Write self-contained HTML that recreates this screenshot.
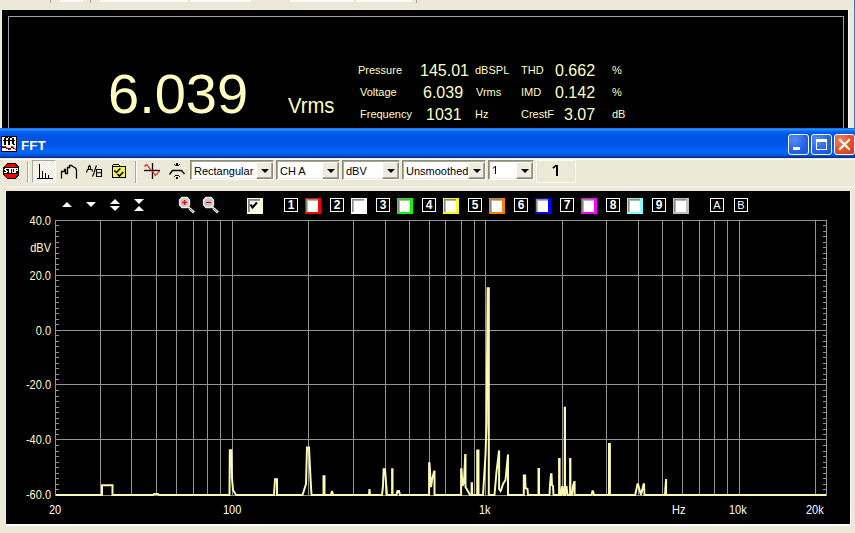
<!DOCTYPE html>
<html><head><meta charset="utf-8">
<style>
*{margin:0;padding:0;box-sizing:border-box}
html,body{width:855px;height:533px;overflow:hidden;background:#ECE9D8;font-family:"Liberation Sans",sans-serif}
.a{position:absolute}
.lbl{position:absolute;color:#FFFFC0;font-size:11px;line-height:11px;white-space:nowrap}
.val{position:absolute;color:#FFFFC0;font-size:16px;line-height:16px;white-space:nowrap}
.combo{position:absolute;top:160px;height:20px;background:#fff;border-top:1px solid #8E8A7A;border-left:1px solid #8E8A7A;border-right:1px solid #fff;border-bottom:1px solid #fff;box-shadow:inset 1px 1px 0 #ACA899, inset -1px -1px 0 #F1EFE6}
.combo span{position:absolute;left:3px;top:4px;font-size:11px;line-height:12px;color:#000;letter-spacing:0px}
.dd{position:absolute;right:0px;top:1px;width:17px;height:17px;background:#EEEBE0;border-top:1px solid #fff;border-left:1px solid #fff;border-right:1px solid #8E8A7A;border-bottom:1px solid #8E8A7A;box-shadow:inset -1px -1px 0 #ACA899}
.dd:after{content:"";position:absolute;left:4px;top:6px;border-left:4px solid transparent;border-right:4px solid transparent;border-top:4px solid #000}
.nb{position:absolute;top:198px;width:14px;height:14px;border:1px solid #fff;color:#fff;font-family:"Liberation Sans",sans-serif;font-weight:bold;font-size:12px;line-height:13px;text-align:center}
.cb{position:absolute;top:198px;width:16px;height:16px}
.cb i{position:absolute;left:1px;top:1px;width:12px;height:13px;background:#fff;border-top:1px solid #8A8A80;border-left:1px solid #8A8A80;box-shadow:inset 1px 1px 0 #B8B4A8}
.tb{position:absolute;top:160px;width:24px;height:23px}
.sep{position:absolute;top:161px;width:2px;height:22px;border-left:1px solid #ACA899;border-right:1px solid #fff}
.xl{position:absolute;color:#fff;font-size:11px;line-height:11px;white-space:nowrap;transform:scaleY(1.13);transform-origin:0 0}
.yl{position:absolute;color:#FFFFC0;font-size:11px;line-height:11px;white-space:nowrap;text-align:right;width:40px;transform:scaleY(1.13);transform-origin:0 0}
</style></head><body>

<!-- top window strip -->
<div class="a" style="left:60px;top:0;width:23px;height:2px;background:#FAF9F5"></div><div class="a" style="left:100px;top:0;width:88px;height:2px;background:#FAF9F5"></div><div class="a" style="left:190px;top:0;width:61px;height:2px;background:#FAF9F5"></div><div class="a" style="left:290px;top:0;width:64px;height:2px;background:#FAF9F5"></div><div class="a" style="left:356px;top:0;width:56px;height:2px;background:#FAF9F5"></div><div class="a" style="left:50px;top:0;width:1px;height:3px;background:#A8A498"></div><div class="a" style="left:90px;top:0;width:1px;height:3px;background:#A8A498"></div><div class="a" style="left:416px;top:0;width:1px;height:3px;background:#A8A498"></div>
<div class="a" style="left:854px;top:0;width:1px;height:128px;background:#3D6DE0"></div>
<!-- top black panel -->
<div class="a" style="left:2px;top:10px;width:847px;height:118px;background:#000;border-right:1px solid #fff"></div>
<div class="a" style="left:8px;top:16px;width:836px;height:130px;border:1px solid #A0A0A0"></div>

<div class="a" style="left:108px;top:62px;font-size:56px;line-height:64px;color:#FFFFC0">6.039</div>
<div class="a" style="left:288px;top:93px;font-size:22px;line-height:25px;color:#FFFFC0;transform:scaleX(0.92);transform-origin:0 0">Vrms</div>

<div class="lbl" style="left:358px;top:65px">Pressure</div>
<div class="lbl" style="left:360px;top:87px">Voltage</div>
<div class="lbl" style="left:360px;top:109px">Frequency</div>
<div class="val" style="left:420px;top:63px">145.01</div>
<div class="val" style="left:423px;top:85px">6.039</div>
<div class="val" style="left:426px;top:107px">1031</div>
<div class="lbl" style="left:475px;top:65px">dBSPL</div>
<div class="lbl" style="left:476px;top:87px">Vrms</div>
<div class="lbl" style="left:475px;top:109px">Hz</div>
<div class="lbl" style="left:521px;top:65px">THD</div>
<div class="lbl" style="left:521px;top:87px">IMD</div>
<div class="lbl" style="left:521px;top:109px">CrestF</div>
<div class="val" style="left:555px;top:63px">0.662</div>
<div class="val" style="left:555px;top:85px">0.142</div>
<div class="val" style="left:564px;top:107px">3.07</div>
<div class="lbl" style="left:612px;top:65px">%</div>
<div class="lbl" style="left:612px;top:87px">%</div>
<div class="lbl" style="left:612px;top:109px">dB</div>

<!-- title bar -->
<div class="a" style="left:0;top:128px;width:855px;height:30px;background:linear-gradient(to bottom,#0058ee 0%,#3593ff 4%,#288eff 6%,#127dff 8%,#036ffc 10%,#0262ee 14%,#0057e5 20%,#0054e3 24%,#0055eb 56%,#005bf5 66%,#026afe 76%,#0062ef 86%,#0052d6 92%,#0040ab 94%,#003092 100%)"></div>
<svg class="a" style="left:1px;top:136px" width="16" height="16" viewBox="0 0 16 16" shape-rendering="crispEdges">
<rect x="0" y="0" width="16" height="16" fill="#000"/><rect x="1" y="1" width="14" height="14" fill="#fff"/>
<g fill="#000"><rect x="3" y="2" width="2" height="7"/><rect x="4" y="1" width="3" height="1"/><rect x="2" y="4" width="4" height="1"/>
<rect x="7" y="2" width="2" height="7"/><rect x="8" y="1" width="3" height="1"/><rect x="6" y="4" width="4" height="1"/>
<rect x="11" y="2" width="2" height="6"/><rect x="10" y="4" width="4" height="1"/><rect x="12" y="8" width="2" height="1"/>
<rect x="1" y="11" width="4" height="1"/><rect x="5" y="12" width="2" height="1"/><rect x="7" y="12" width="3" height="1"/><rect x="10" y="11" width="2" height="1"/><rect x="12" y="12" width="2" height="1"/></g>
<g fill="#f00"><rect x="1" y="10" width="4" height="1"/><rect x="5" y="11" width="1" height="1"/><rect x="6" y="12" width="1" height="1"/><rect x="7" y="13" width="2" height="1"/><rect x="9" y="12" width="1" height="2"/><rect x="10" y="10" width="2" height="1"/><rect x="12" y="11" width="1" height="1"/><rect x="13" y="12" width="1" height="1"/><rect x="14" y="13" width="1" height="1"/></g>
</svg>
<div class="a" style="left:21px;top:138px;font-size:13.5px;line-height:16px;font-weight:bold;color:#fff">FFT</div>
<!-- title buttons -->
<div class="a" style="left:788px;top:134px;width:21px;height:21px;border:1px solid #fff;border-radius:3px;background:radial-gradient(circle at 30% 25%,#5a8cff 0%,#2663ea 55%,#1a4fd8 100%)"><div class="a" style="left:4px;top:12px;width:7px;height:3px;background:#fff"></div></div>
<div class="a" style="left:811px;top:134px;width:21px;height:21px;border:1px solid #fff;border-radius:3px;background:radial-gradient(circle at 30% 25%,#5a8cff 0%,#2663ea 55%,#1a4fd8 100%)"><div class="a" style="left:4px;top:4px;width:11px;height:11px;border:1px solid #fff;border-top-width:3px"></div></div>
<div class="a" style="left:834px;top:134px;width:21px;height:21px;border:1px solid #fff;border-radius:3px;background:radial-gradient(circle at 30% 25%,#f08060 0%,#e0502a 55%,#c83a1a 100%)">
<svg class="a" style="left:0;top:0" width="19" height="19"><path d="M5 5 L14 14 M14 5 L5 14" stroke="#fff" stroke-width="2.2" stroke-linecap="square"/></svg></div>

<!-- toolbar -->
<div class="a" style="left:0;top:159px;width:855px;height:1px;background:#FFFFFF"></div><div class="a" style="left:0;top:186px;width:855px;height:2px;background:#F2F0E6"></div>
<svg class="a" style="left:3px;top:163px" width="16" height="16" viewBox="0 0 16 16" shape-rendering="crispEdges">
<polygon points="4,0 12,0 16,4 16,12 12,16 4,16 0,12 0,4" fill="#000"/>
<polygon points="4.5,1 11.5,1 15,4.5 15,11.5 11.5,15 4.5,15 1,11.5 1,4.5" fill="#f00"/>
<rect x="1" y="4" width="14" height="7" fill="#000"/>
<g fill="#fff"><rect x="2" y="5" width="3" height="1"/><rect x="1" y="6" width="2" height="1"/><rect x="2" y="7" width="2" height="1"/><rect x="3" y="8" width="2" height="1"/><rect x="1" y="9" width="3" height="1"/><rect x="5" y="5" width="4" height="1"/><rect x="6" y="6" width="2" height="4"/><rect x="9" y="5" width="3" height="1"/><rect x="9" y="9" width="3" height="1"/><rect x="9" y="6" width="1" height="3"/><rect x="11" y="6" width="1" height="3"/><rect x="12" y="5" width="3" height="1"/><rect x="12" y="6" width="1" height="4"/><rect x="14" y="6" width="1" height="1"/><rect x="12" y="7" width="3" height="1"/></g>
</svg>
<div class="sep" style="left:27px"></div>
<div class="tb" style="left:32px;background-color:#F4F3EE;background-image:repeating-conic-gradient(#fff 0 25%,#ECE9D8 0 50%);background-size:2px 2px;border-top:1px solid #ACA899;border-left:1px solid #ACA899;border-right:1px solid #fff;border-bottom:1px solid #fff"></div>
<svg class="a" style="left:36px;top:163px" width="18" height="17"><g fill="#000" shape-rendering="crispEdges"><rect x="3" y="1" width="1" height="15"/><rect x="6" y="8" width="1" height="8"/><rect x="9" y="10" width="1" height="6"/><rect x="12" y="12" width="1" height="4"/><rect x="1" y="15" width="16" height="1"/></g></svg>
<svg class="a" style="left:58px;top:162px" width="22" height="20"><path d="M3.5 16.5 V9.5 H6.5 V7.5 H7.5 V11.5 H9.5 V5.5 H11.5 V3.5 H13.5 L15.5 5 L17.5 6 L18.5 8 V16.5" fill="none" stroke="#000" stroke-width="1.3"/></svg>
<svg class="a" style="left:83px;top:162px" width="22" height="20"><g fill="none" stroke="#000" stroke-width="1.1">
<path d="M3.5 10.5 L4.5 7.5 H9 L9.5 9.5 M5.5 7.5 V5 L6.5 3.5 L7.5 5 V7.5"/><path d="M13.5 3.5 L12.5 6 L11 11 L9.5 14.5"/>
<path d="M13.5 7.5 H18.5 V14.5 H13.5 Z M13.5 10.8 H18.5"/></g></svg>
<svg class="a" style="left:108px;top:162px" width="22" height="20" shape-rendering="crispEdges"><rect x="4" y="4" width="14" height="12" fill="#000"/><rect x="5" y="5" width="12" height="10" fill="#F4F450"/>
<rect x="5" y="2" width="6" height="1" fill="#000"/><rect x="5" y="3" width="6" height="1" fill="#F4F450"/><rect x="4" y="3" width="1" height="1" fill="#000"/><rect x="11" y="3" width="1" height="1" fill="#000"/>
<path d="M6.3 8.5 L8.5 10.5 L12.3 6.5 M9.5 12 L11.3 14 L15.3 10" fill="none" stroke="#000" stroke-width="1.6" shape-rendering="auto"/></svg>
<div class="sep" style="left:135px"></div>
<svg class="a" style="left:141px;top:161px" width="22" height="20"><path d="M3 9.5 H19" stroke="#000" stroke-width="1.3"/><path d="M11.5 2 V18" stroke="#000" stroke-width="1.3"/>
<path d="M3.5 5.5 L5.5 3.5 L14.5 14.5 L18.5 10" fill="none" stroke="#f00" stroke-width="1.1"/></svg>
<svg class="a" style="left:166px;top:161px" width="22" height="20"><g fill="#000"><rect x="10" y="2" width="2" height="2"/><rect x="8" y="3" width="1" height="1"/><rect x="13" y="3" width="1" height="1"/><rect x="9" y="4" width="4" height="1"/>
<rect x="9" y="14" width="4" height="1"/><rect x="8" y="15" width="1" height="1"/><rect x="13" y="15" width="1" height="1"/><rect x="10" y="16" width="2" height="2"/></g>
<path d="M3.5 13.5 L6.5 9.5 H15.5 L18.5 13" fill="none" stroke="#000" stroke-width="1.3"/></svg>

<div class="combo" style="left:190px;width:84px"><span>Rectangular</span><div class="dd"></div></div>
<div class="combo" style="left:276px;width:64px"><span>CH A</span><div class="dd"></div></div>
<div class="combo" style="left:342px;width:58px"><span>dBV</span><div class="dd"></div></div>
<div class="combo" style="left:402px;width:84px"><span>Unsmoothed</span><div class="dd"></div></div>
<div class="combo" style="left:488px;width:46px"><svg class="a" style="left:3px;top:5px" width="6" height="10"><rect x="3" y="0" width="1" height="8" fill="#000"/><path d="M0.8 2.5 L3 0.5" stroke="#000" stroke-width="1"/></svg><div class="dd"></div></div>
<div class="a" style="left:536px;top:160px;width:40px;height:23px;background:#ECE9D8;border:1px solid #F8F7F2;font-size:16px;font-weight:normal;line-height:20px;text-align:center;color:#000"><svg class="a" style="left:15px;top:3px" width="8" height="13"><rect x="4" y="1" width="2" height="11" fill="#000"/><path d="M0.8 4.2 L4.5 1.2" stroke="#000" stroke-width="1.6"/></svg></div>

<!-- plot panel -->
<div class="a" style="left:6px;top:191px;width:845px;height:335px;background:#000;border-right:1px solid #fff;border-bottom:2px solid #fff"></div>

<!-- header icons -->
<svg class="a" style="left:56px;top:196px" width="100" height="18"><g fill="#fff">
<polygon points="11,6 16,11 6,11"/>
<polygon points="30,6 40,6 35,11"/>
<polygon points="59,3 64,8 54,8"/><polygon points="54,10 64,10 59,15"/>
<polygon points="78,3 88,3 83,8"/><polygon points="83,10 88,15 78,15"/>
</g></svg>
<svg class="a" style="left:174px;top:194px" width="48" height="22">
<line x1="15.5" y1="14.5" x2="20" y2="18.5" stroke="#fff" stroke-width="2.6"/><line x1="15.7" y1="14.7" x2="19.5" y2="18" stroke="#000" stroke-width="0.6"/><rect x="14" y="12.5" width="2" height="2" fill="#FF0"/>
<polygon points="8,3.5 13,3.5 15.5,6 15.5,11 13,13.5 8,13.5 5.5,11 5.5,6" fill="#C4C8CC" stroke="#F0F0F0" stroke-width="1.3"/>
<path d="M8 8.5 H13 M10.5 6 V11" stroke="#f00" stroke-width="1.3"/>
<line x1="39.5" y1="14.5" x2="44" y2="18.5" stroke="#fff" stroke-width="2.6"/><line x1="39.7" y1="14.7" x2="43.5" y2="18" stroke="#000" stroke-width="0.6"/><rect x="38" y="12.5" width="2" height="2" fill="#FF0"/>
<polygon points="32,3.5 37,3.5 39.5,6 39.5,11 37,13.5 32,13.5 29.5,11 29.5,6" fill="#C4C8CC" stroke="#F0F0F0" stroke-width="1.3"/>
<path d="M32 8.5 H37" stroke="#f00" stroke-width="1.3"/>
</svg>
<div class="a" style="left:247px;top:198px;width:16px;height:16px;background:#FFFFD0"><div class="a" style="left:1px;top:1px;width:12px;height:13px;background:#fff;border-top:1px solid #808078;border-left:1px solid #808078;box-shadow:inset 1px 1px 0 #9A9890"></div>
<svg class="a" style="left:3px;top:3px" width="10" height="10"><path d="M0.5 3.5 L2.5 6.5 L7 1.5" fill="none" stroke="#000" stroke-width="2.2"/></svg></div>

<div class="nb" style="left:284px">1</div><div class="cb" style="left:305px;background:#f00"><i></i></div>
<div class="nb" style="left:330px">2</div><div class="cb" style="left:351px;background:#fff"><i></i></div>
<div class="nb" style="left:376px">3</div><div class="cb" style="left:397px;background:#0f0"><i></i></div>
<div class="nb" style="left:422px">4</div><div class="cb" style="left:443px;background:#ff0"><i></i></div>
<div class="nb" style="left:468px">5</div><div class="cb" style="left:489px;background:#FF8000"><i></i></div>
<div class="nb" style="left:514px">6</div><div class="cb" style="left:535px;background:#00f"><i></i></div>
<div class="nb" style="left:560px">7</div><div class="cb" style="left:581px;background:#f0f"><i></i></div>
<div class="nb" style="left:606px">8</div><div class="cb" style="left:627px;background:#80FFFF"><i></i></div>
<div class="nb" style="left:652px">9</div><div class="cb" style="left:673px;background:#C0C0C0"><i></i></div>
<div class="nb" style="left:710px;font-size:11px;font-weight:normal">A</div>
<div class="nb" style="left:734px;font-size:11px;font-weight:normal">B</div>

<svg width="855" height="533" style="position:absolute;left:0;top:0">
<g shape-rendering="crispEdges"><rect x="100" y="220" width="1" height="275" fill="#949494"/><rect x="131" y="220" width="1" height="275" fill="#949494"/><rect x="156" y="220" width="1" height="275" fill="#949494"/><rect x="176" y="220" width="1" height="275" fill="#949494"/><rect x="193" y="220" width="1" height="275" fill="#949494"/><rect x="207" y="220" width="1" height="275" fill="#949494"/><rect x="220" y="220" width="1" height="275" fill="#949494"/><rect x="232" y="220" width="1" height="275" fill="#949494"/><rect x="308" y="220" width="1" height="275" fill="#949494"/><rect x="353" y="220" width="1" height="275" fill="#949494"/><rect x="385" y="220" width="1" height="275" fill="#949494"/><rect x="409" y="220" width="1" height="275" fill="#949494"/><rect x="429" y="220" width="1" height="275" fill="#949494"/><rect x="445" y="220" width="1" height="275" fill="#949494"/><rect x="461" y="220" width="1" height="275" fill="#949494"/><rect x="474" y="220" width="1" height="275" fill="#949494"/><rect x="485" y="220" width="1" height="275" fill="#949494"/><rect x="562" y="220" width="1" height="275" fill="#949494"/><rect x="606" y="220" width="1" height="275" fill="#949494"/><rect x="638" y="220" width="1" height="275" fill="#949494"/><rect x="662" y="220" width="1" height="275" fill="#949494"/><rect x="682" y="220" width="1" height="275" fill="#949494"/><rect x="699" y="220" width="1" height="275" fill="#949494"/><rect x="714" y="220" width="1" height="275" fill="#949494"/><rect x="727" y="220" width="1" height="275" fill="#949494"/><rect x="739" y="220" width="1" height="275" fill="#949494"/><rect x="815" y="220" width="1" height="275" fill="#949494"/><rect x="56" y="220" width="771" height="1" fill="#949494"/><rect x="56" y="275" width="771" height="1" fill="#949494"/><rect x="56" y="330" width="771" height="1" fill="#949494"/><rect x="56" y="384" width="771" height="1" fill="#949494"/><rect x="56" y="439" width="771" height="1" fill="#949494"/><rect x="56" y="225" width="3" height="1" fill="#949494"/><rect x="823" y="225" width="3" height="1" fill="#949494"/><rect x="56" y="231" width="3" height="1" fill="#949494"/><rect x="823" y="231" width="3" height="1" fill="#949494"/><rect x="56" y="236" width="3" height="1" fill="#949494"/><rect x="823" y="236" width="3" height="1" fill="#949494"/><rect x="56" y="242" width="3" height="1" fill="#949494"/><rect x="823" y="242" width="3" height="1" fill="#949494"/><rect x="56" y="247" width="3" height="1" fill="#949494"/><rect x="823" y="247" width="3" height="1" fill="#949494"/><rect x="56" y="253" width="3" height="1" fill="#949494"/><rect x="823" y="253" width="3" height="1" fill="#949494"/><rect x="56" y="258" width="3" height="1" fill="#949494"/><rect x="823" y="258" width="3" height="1" fill="#949494"/><rect x="56" y="264" width="3" height="1" fill="#949494"/><rect x="823" y="264" width="3" height="1" fill="#949494"/><rect x="56" y="269" width="3" height="1" fill="#949494"/><rect x="823" y="269" width="3" height="1" fill="#949494"/><rect x="56" y="280" width="3" height="1" fill="#949494"/><rect x="823" y="280" width="3" height="1" fill="#949494"/><rect x="56" y="286" width="3" height="1" fill="#949494"/><rect x="823" y="286" width="3" height="1" fill="#949494"/><rect x="56" y="291" width="3" height="1" fill="#949494"/><rect x="823" y="291" width="3" height="1" fill="#949494"/><rect x="56" y="297" width="3" height="1" fill="#949494"/><rect x="823" y="297" width="3" height="1" fill="#949494"/><rect x="56" y="302" width="3" height="1" fill="#949494"/><rect x="823" y="302" width="3" height="1" fill="#949494"/><rect x="56" y="308" width="3" height="1" fill="#949494"/><rect x="823" y="308" width="3" height="1" fill="#949494"/><rect x="56" y="313" width="3" height="1" fill="#949494"/><rect x="823" y="313" width="3" height="1" fill="#949494"/><rect x="56" y="319" width="3" height="1" fill="#949494"/><rect x="823" y="319" width="3" height="1" fill="#949494"/><rect x="56" y="324" width="3" height="1" fill="#949494"/><rect x="823" y="324" width="3" height="1" fill="#949494"/><rect x="56" y="335" width="3" height="1" fill="#949494"/><rect x="823" y="335" width="3" height="1" fill="#949494"/><rect x="56" y="341" width="3" height="1" fill="#949494"/><rect x="823" y="341" width="3" height="1" fill="#949494"/><rect x="56" y="346" width="3" height="1" fill="#949494"/><rect x="823" y="346" width="3" height="1" fill="#949494"/><rect x="56" y="352" width="3" height="1" fill="#949494"/><rect x="823" y="352" width="3" height="1" fill="#949494"/><rect x="56" y="357" width="3" height="1" fill="#949494"/><rect x="823" y="357" width="3" height="1" fill="#949494"/><rect x="56" y="363" width="3" height="1" fill="#949494"/><rect x="823" y="363" width="3" height="1" fill="#949494"/><rect x="56" y="368" width="3" height="1" fill="#949494"/><rect x="823" y="368" width="3" height="1" fill="#949494"/><rect x="56" y="374" width="3" height="1" fill="#949494"/><rect x="823" y="374" width="3" height="1" fill="#949494"/><rect x="56" y="379" width="3" height="1" fill="#949494"/><rect x="823" y="379" width="3" height="1" fill="#949494"/><rect x="56" y="390" width="3" height="1" fill="#949494"/><rect x="823" y="390" width="3" height="1" fill="#949494"/><rect x="56" y="396" width="3" height="1" fill="#949494"/><rect x="823" y="396" width="3" height="1" fill="#949494"/><rect x="56" y="401" width="3" height="1" fill="#949494"/><rect x="823" y="401" width="3" height="1" fill="#949494"/><rect x="56" y="407" width="3" height="1" fill="#949494"/><rect x="823" y="407" width="3" height="1" fill="#949494"/><rect x="56" y="412" width="3" height="1" fill="#949494"/><rect x="823" y="412" width="3" height="1" fill="#949494"/><rect x="56" y="418" width="3" height="1" fill="#949494"/><rect x="823" y="418" width="3" height="1" fill="#949494"/><rect x="56" y="423" width="3" height="1" fill="#949494"/><rect x="823" y="423" width="3" height="1" fill="#949494"/><rect x="56" y="429" width="3" height="1" fill="#949494"/><rect x="823" y="429" width="3" height="1" fill="#949494"/><rect x="56" y="434" width="3" height="1" fill="#949494"/><rect x="823" y="434" width="3" height="1" fill="#949494"/><rect x="56" y="445" width="3" height="1" fill="#949494"/><rect x="823" y="445" width="3" height="1" fill="#949494"/><rect x="56" y="451" width="3" height="1" fill="#949494"/><rect x="823" y="451" width="3" height="1" fill="#949494"/><rect x="56" y="456" width="3" height="1" fill="#949494"/><rect x="823" y="456" width="3" height="1" fill="#949494"/><rect x="56" y="462" width="3" height="1" fill="#949494"/><rect x="823" y="462" width="3" height="1" fill="#949494"/><rect x="56" y="467" width="3" height="1" fill="#949494"/><rect x="823" y="467" width="3" height="1" fill="#949494"/><rect x="56" y="473" width="3" height="1" fill="#949494"/><rect x="823" y="473" width="3" height="1" fill="#949494"/><rect x="56" y="478" width="3" height="1" fill="#949494"/><rect x="823" y="478" width="3" height="1" fill="#949494"/><rect x="56" y="484" width="3" height="1" fill="#949494"/><rect x="823" y="484" width="3" height="1" fill="#949494"/><rect x="56" y="489" width="3" height="1" fill="#949494"/><rect x="823" y="489" width="3" height="1" fill="#949494"/><rect x="55" y="220" width="1" height="276" fill="#949494"/><rect x="826" y="220" width="1" height="276" fill="#949494"/><rect x="56" y="495" width="771" height="1" fill="#949494"/></g>
<polyline points="56,495 102,495 102,485.3 112.5,485.3 112.5,495 153,495 154,494 158,494 159,495 229.5,495 229.8,450.2 231.4,450.2 232,478 233,490 236,495 274,495 274.5,487 275,479.3 277,479.3 277,495 302.5,495 306,484 307,447.4 309,447.4 309.5,458 310.5,478 311.5,495 323.5,495 323.5,476.3 324.5,476.3 324.5,495 331,495 332,491 333,495 369,495 369.5,489.2 370,495 382,495 383,486 383.6,469.3 385,469.3 386,482 387,495 392.1,495 392.1,469.3 392.5,469.3 392.5,495 396.5,495 397.5,491 399,491 400,495 429.1,495 429.1,463.2 429.5,463.2 431,487 432,480 434.1,471.5 434.5,471.5 434.5,495 461.1,495 461.1,469.2 461.5,469.2 462.5,486 464,482 465.2,455.1 465.5,455.1 465.5,487 469.5,494 470,495 471.6,495 471.6,483.3 472,483.3 472,495 477.2,495 477.2,450.4 478.5,450.4 478.5,495 483,495 485.5,455 486.6,423 487.6,288.3 488.8,288.3 488.8,495 494.5,495 496.5,472 499.1,450.4 499.1,489 500.5,491 501.5,489 503,484 505.5,480 508,454.4 508,495 523.8,495 523.8,475.4 525.1,475.4 525.5,488 527.5,489 528,495 538.5,495 538.5,469 539,469 539,495 549.5,495 550,485 551,474.2 551.5,474.2 552,485 553,486 553.5,495 559.1,495 559.1,459 559.6,459 559.6,495 561,495 562,487 562.5,487 563.5,495 564.75,495 564.75,407.8 565,407.8 565,495 566.5,486 567.5,495 570.1,495 570.1,459 570.4,459 570.4,495 572,495 573,486 574.3,482 574.6,482 574.6,495 591.5,495 592.5,491.2 593,491.2 594,495 609,495 609,444.1 609.9,444.1 609.9,495 635.2,495 637.5,484.3 638,484.3 641,495 643.6,484.3 644,484.3 644.5,495 665,495 665.5,487 666.1,479.1 666.1,495 826,495" fill="none" stroke="#FAFAB4" stroke-width="2" stroke-linejoin="miter" stroke-miterlimit="2"/>
</svg>

<!-- axis labels -->
<div class="yl" style="left:11px;top:215px">40.0</div>
<div class="yl" style="left:11px;top:242px">dBV</div>
<div class="yl" style="left:11px;top:270px">20.0</div>
<div class="yl" style="left:11px;top:325px">0.0</div>
<div class="yl" style="left:11px;top:379px">-20.0</div>
<div class="yl" style="left:11px;top:434px">-40.0</div>
<div class="yl" style="left:11px;top:489px">-60.0</div>
<div class="xl" style="left:49px;top:504px">20</div>
<div class="xl" style="left:223px;top:504px">100</div>
<div class="xl" style="left:479px;top:504px">1k</div>
<div class="xl" style="left:672px;top:504px">Hz</div>
<div class="xl" style="left:729px;top:504px">10k</div>
<div class="xl" style="left:806px;top:504px">20k</div>

</body></html>
